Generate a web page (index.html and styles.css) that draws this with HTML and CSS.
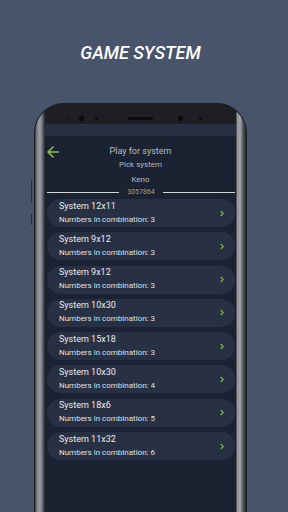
FILE: index.html
```html
<!DOCTYPE html>
<html lang="en">
<head>
  <meta charset="UTF-8">
  <title>Game System</title>
  <link rel="stylesheet" href="styles.css">
</head>
<body>

  <div class="device">
    <h1 class="title">GAME SYSTEM</h1>

    <!-- Phone frame -->
    <div class="phone">
      <span class="side-key key-1"></span>
      <span class="side-key key-2"></span>
      <div class="rim">
        <div class="face">
          <div class="bezel">
            <div class="sensors">
              <span class="dot d1"></span>
              <span class="dot d2"></span>
              <span class="dot d3"></span>
              <span class="speaker"></span>
              <span class="dot d4"></span>
              <span class="dot d5"></span>
            </div>
          </div>

          <div class="screen">
            <div class="statusbar"></div>

            <div class="app">
              <div class="app-head">
                <svg class="back" width="18" height="18" viewBox="0 0 24 24">
                  <path d="M20 11H7.83l5.59-5.59L12 4l-8 8 8 8 1.41-1.41L7.83 13H20v-2z" fill="#8bc34a"/>
                </svg>
                <div class="head-title">Play for system</div>
                <span></span>
              </div>
              <div class="head-sub">Pick system</div>
              <div class="game-name">Keno</div>
              <div class="draw-row">
                <span class="rule"></span>
                <span class="draw-no">3057864</span>
                <span class="rule"></span>
              </div>

              <!-- System list -->
              <div class="systems">
                <div class="system">
                  <div class="system-text">
                    <div class="system-name">System 12x11</div>
                    <div class="system-info">Numbers in combination: 3</div>
                  </div>
                  <svg class="chev" width="4" height="7" viewBox="0 0 4 7"><path d="M0.8 1l2.4 2.5-2.4 2.5" stroke="#7cb342" stroke-width="1.3" fill="none"/></svg>
                </div>
                <div class="system">
                  <div class="system-text">
                    <div class="system-name">System 9x12</div>
                    <div class="system-info">Numbers in combination: 3</div>
                  </div>
                  <svg class="chev" width="4" height="7" viewBox="0 0 4 7"><path d="M0.8 1l2.4 2.5-2.4 2.5" stroke="#7cb342" stroke-width="1.3" fill="none"/></svg>
                </div>
                <div class="system">
                  <div class="system-text">
                    <div class="system-name">System 9x12</div>
                    <div class="system-info">Numbers in combination: 3</div>
                  </div>
                  <svg class="chev" width="4" height="7" viewBox="0 0 4 7"><path d="M0.8 1l2.4 2.5-2.4 2.5" stroke="#7cb342" stroke-width="1.3" fill="none"/></svg>
                </div>
                <div class="system">
                  <div class="system-text">
                    <div class="system-name">System 10x30</div>
                    <div class="system-info">Numbers in combination: 3</div>
                  </div>
                  <svg class="chev" width="4" height="7" viewBox="0 0 4 7"><path d="M0.8 1l2.4 2.5-2.4 2.5" stroke="#7cb342" stroke-width="1.3" fill="none"/></svg>
                </div>
                <div class="system">
                  <div class="system-text">
                    <div class="system-name">System 15x18</div>
                    <div class="system-info">Numbers in combination: 3</div>
                  </div>
                  <svg class="chev" width="4" height="7" viewBox="0 0 4 7"><path d="M0.8 1l2.4 2.5-2.4 2.5" stroke="#7cb342" stroke-width="1.3" fill="none"/></svg>
                </div>
                <div class="system">
                  <div class="system-text">
                    <div class="system-name">System 10x30</div>
                    <div class="system-info">Numbers in combination: 4</div>
                  </div>
                  <svg class="chev" width="4" height="7" viewBox="0 0 4 7"><path d="M0.8 1l2.4 2.5-2.4 2.5" stroke="#7cb342" stroke-width="1.3" fill="none"/></svg>
                </div>
                <div class="system">
                  <div class="system-text">
                    <div class="system-name">System 18x6</div>
                    <div class="system-info">Numbers in combination: 5</div>
                  </div>
                  <svg class="chev" width="4" height="7" viewBox="0 0 4 7"><path d="M0.8 1l2.4 2.5-2.4 2.5" stroke="#7cb342" stroke-width="1.3" fill="none"/></svg>
                </div>
                <div class="system">
                  <div class="system-text">
                    <div class="system-name">System 11x32</div>
                    <div class="system-info">Numbers in combination: 6</div>
                  </div>
                  <svg class="chev" width="4" height="7" viewBox="0 0 4 7"><path d="M0.8 1l2.4 2.5-2.4 2.5" stroke="#7cb342" stroke-width="1.3" fill="none"/></svg>
                </div>
              </div>
            </div>
          </div>
        </div>
      </div>
    </div>
  </div>

</body>
</html>
```

FILE: styles.css
```css
body {
  margin: 0;
  height: 512px;
  overflow: hidden;
  background: #48546b;
  font-family: Roboto, 'Noto Sans', sans-serif;
}

.device {
  width: 213px;
  margin-left: 34px;
}

.title {
  margin: 0;
  padding-top: 42px;
  font-size: 18px;
  line-height: 21px;
  font-weight: 500;
  font-style: italic;
  color: #fff;
  text-align: center;
}

/* phone frame */
.phone {
  position: relative;
  margin-top: 40px;
  height: 408px;
  padding: 1px 1px 0;
  background: #1c1d1f;
  border-radius: 30px 30px 0 0;
}

.side-key {
  position: absolute;
  left: -3px;
  width: 1px;
  background: #2b3240;
}

.key-1 {
  top: 77px;
  height: 23px;
}

.key-2 {
  top: 111px;
  height: 11px;
}

.rim {
  height: 100%;
  padding: 0 10px;
  border-radius: 29px 29px 0 0;
  background: linear-gradient(to right,
    #3b3e43 0,
    #7d8289 2px,
    #9ca0a6 5px,
    #5b5f65 8px,
    #1e1f22 10px,
    #1e1f22 calc(100% - 10px),
    #8e9298 calc(100% - 9px),
    #a3a7ad calc(100% - 6px),
    #55585e calc(100% - 3px),
    #1f2023 100%);
}

.face {
  height: 100%;
  background: #1e1f22;
  border-radius: 22px 22px 0 0;
  display: flex;
  flex-direction: column;
}

.bezel {
  height: 20px;
  flex-shrink: 0;
}

.sensors {
  display: flex;
  align-items: center;
  height: 4px;
  margin-top: 12px;
}

.dot {
  border-radius: 50%;
  background: #0b0b0c;
}

.d1 { width: 2px; height: 2px; margin-left: 21px; }
.d2 { width: 5px; height: 5px; margin-left: 10.5px; }
.d3 { width: 3px; height: 3px; margin-left: 11px; }
.d4 { width: 5px; height: 5px; margin-left: 24.5px; }
.d5 { width: 3px; height: 3px; margin-left: 16px; }

.speaker {
  width: 25px;
  height: 3px;
  margin-left: 30.5px;
  border-radius: 2px;
  background: #0b0b0c;
}

/* screen */
.screen {
  flex: 1;
  background: #1b2232;
}

.statusbar {
  height: 12px;
  background: #273043;
}

.app {
  padding-top: 10px;
}

.app-head {
  display: grid;
  grid-template-columns: 18px 1fr 18px;
  grid-template-rows: 11px;
  align-items: center;
}

.back {
  margin-left: -1px;
}

.head-title {
  font-size: 9px;
  line-height: 11px;
  color: #b6bbc4;
  text-align: center;
}

.head-sub {
  margin-top: 3px;
  font-size: 8px;
  line-height: 10px;
  color: #b3b8c1;
  text-align: center;
}

.game-name {
  margin-top: 5px;
  font-size: 8px;
  line-height: 10px;
  color: #b8bcc4;
  text-align: center;
}

.draw-row {
  display: flex;
  align-items: center;
  gap: 8px;
  height: 9px;
  margin-top: 2.5px;
  padding: 0 1px 0 2px;
}

.rule {
  flex: 1;
  height: 1px;
  background: #d2d5da;
}

.draw-no {
  font-size: 7px;
  line-height: 9px;
  color: #9ca1a9;
}

.systems {
  display: flex;
  flex-direction: column;
  gap: 5.3px;
  margin-top: 2.5px;
  padding: 0 1px 0 2px;
}

.system {
  display: flex;
  align-items: center;
  height: 28px;
  padding: 0 12px;
  border-radius: 14px;
  background: #283043;
}

.system-text {
  flex: 1;
  padding-bottom: 1px;
}

.system-name {
  font-size: 9px;
  line-height: 11px;
  color: #e8eaee;
}

.system-info {
  margin-top: 3px;
  font-size: 8px;
  line-height: 10px;
  color: #dde0e5;
}

.chev {
  flex-shrink: 0;
  margin-right: -1px;
}
```
